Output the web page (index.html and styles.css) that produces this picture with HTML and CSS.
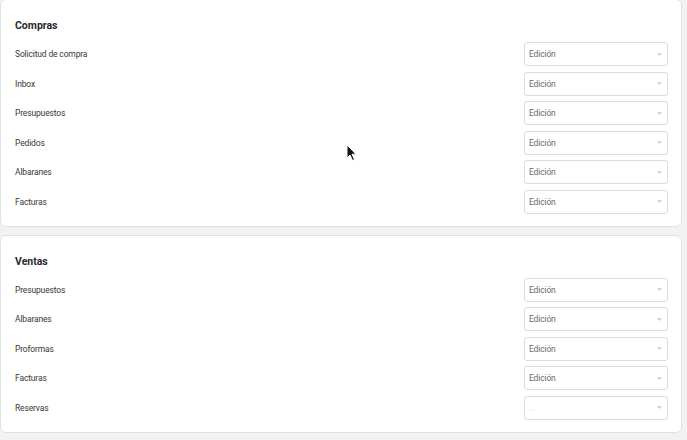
FILE: index.html
```html
<!DOCTYPE html>
<html lang="es">
<head>
<meta charset="utf-8">
<title>Permisos</title>
<link rel="stylesheet" href="styles.css">
</head>
<body>
<main class="page">
  <section class="card card-first">
    <h2 class="card-title">Compras</h2>
    <div class="rows">
      <div class="row"><span class="label">Solicitud de compra</span><div class="select"><span>Edición</span><i class="chev"></i></div></div>
      <div class="row"><span class="label">Inbox</span><div class="select"><span>Edición</span><i class="chev"></i></div></div>
      <div class="row"><span class="label">Presupuestos</span><div class="select"><span>Edición</span><i class="chev"></i></div></div>
      <div class="row"><span class="label">Pedidos</span><div class="select"><span>Edición</span><i class="chev"></i></div></div>
      <div class="row"><span class="label">Albaranes</span><div class="select"><span>Edición</span><i class="chev"></i></div></div>
      <div class="row"><span class="label">Facturas</span><div class="select"><span>Edición</span><i class="chev"></i></div></div>
    </div>
  </section>
  <section class="card">
    <h2 class="card-title">Ventas</h2>
    <div class="rows">
      <div class="row"><span class="label">Presupuestos</span><div class="select"><span>Edición</span><i class="chev"></i></div></div>
      <div class="row"><span class="label">Albaranes</span><div class="select"><span>Edición</span><i class="chev"></i></div></div>
      <div class="row"><span class="label">Proformas</span><div class="select"><span>Edición</span><i class="chev"></i></div></div>
      <div class="row"><span class="label">Facturas</span><div class="select"><span>Edición</span><i class="chev"></i></div></div>
      <div class="row"><span class="label">Reservas</span><div class="select"><span class="placeholder">…</span><i class="chev"></i></div></div>
    </div>
  </section>
</main>
<svg class="cursor" width="12" height="18" viewBox="0 0 12 18" aria-hidden="true">
  <path d="M1 1 L1 14 L4 11 L6.5 16.5 L8.5 15.6 L6 10.2 L10 10.2 Z" fill="#111" stroke="#fff" stroke-width="1"/>
</svg>
</body>
</html>
```

FILE: styles.css
```css
html, body {
  margin: 0;
  padding: 0;
  background: #f2f2f3;
  font-family: Roboto, "Liberation Sans", sans-serif;
  color: #333;
}

.page {
  display: flex;
  flex-direction: column;
  gap: 8px;
  width: 682px;
  margin-top: -1px;
}

.card {
  background: #fff;
  border: 1px solid #e1e1e3;
  border-radius: 6px;
  padding: 18px 13px 12px 14px;
}

.card-title {
  margin: 0 0 8px 0;
  font-size: 10.5px;
  line-height: 16px;
  font-weight: 700;
  color: #2a2a2a;
}

.rows {
  display: flex;
  flex-direction: column;
  gap: 5.5px;
}

.row {
  display: flex;
  align-items: center;
  justify-content: space-between;
  height: 24px;
}

.label {
  font-size: 8.5px;
  letter-spacing: -0.15px;
  color: #383838;
}

.select {
  box-sizing: border-box;
  width: 144px;
  height: 24px;
  border: 1px solid #dcdcde;
  border-radius: 3px;
  display: flex;
  align-items: center;
  justify-content: space-between;
  padding: 0 6px 0 4px;
  font-size: 8.5px;
  letter-spacing: -0.15px;
  color: #6a6a6a;
  background: #fff;
}

.placeholder {
  color: #d8d8d8;
}

.chev {
  width: 2px;
  height: 2px;
  border-right: 1px solid #b8b8b8;
  border-bottom: 1px solid #b8b8b8;
  transform: rotate(45deg);
  margin-top: -2px;
}

.cursor {
  position: absolute;
  left: 346px;
  top: 144px;
}
```
